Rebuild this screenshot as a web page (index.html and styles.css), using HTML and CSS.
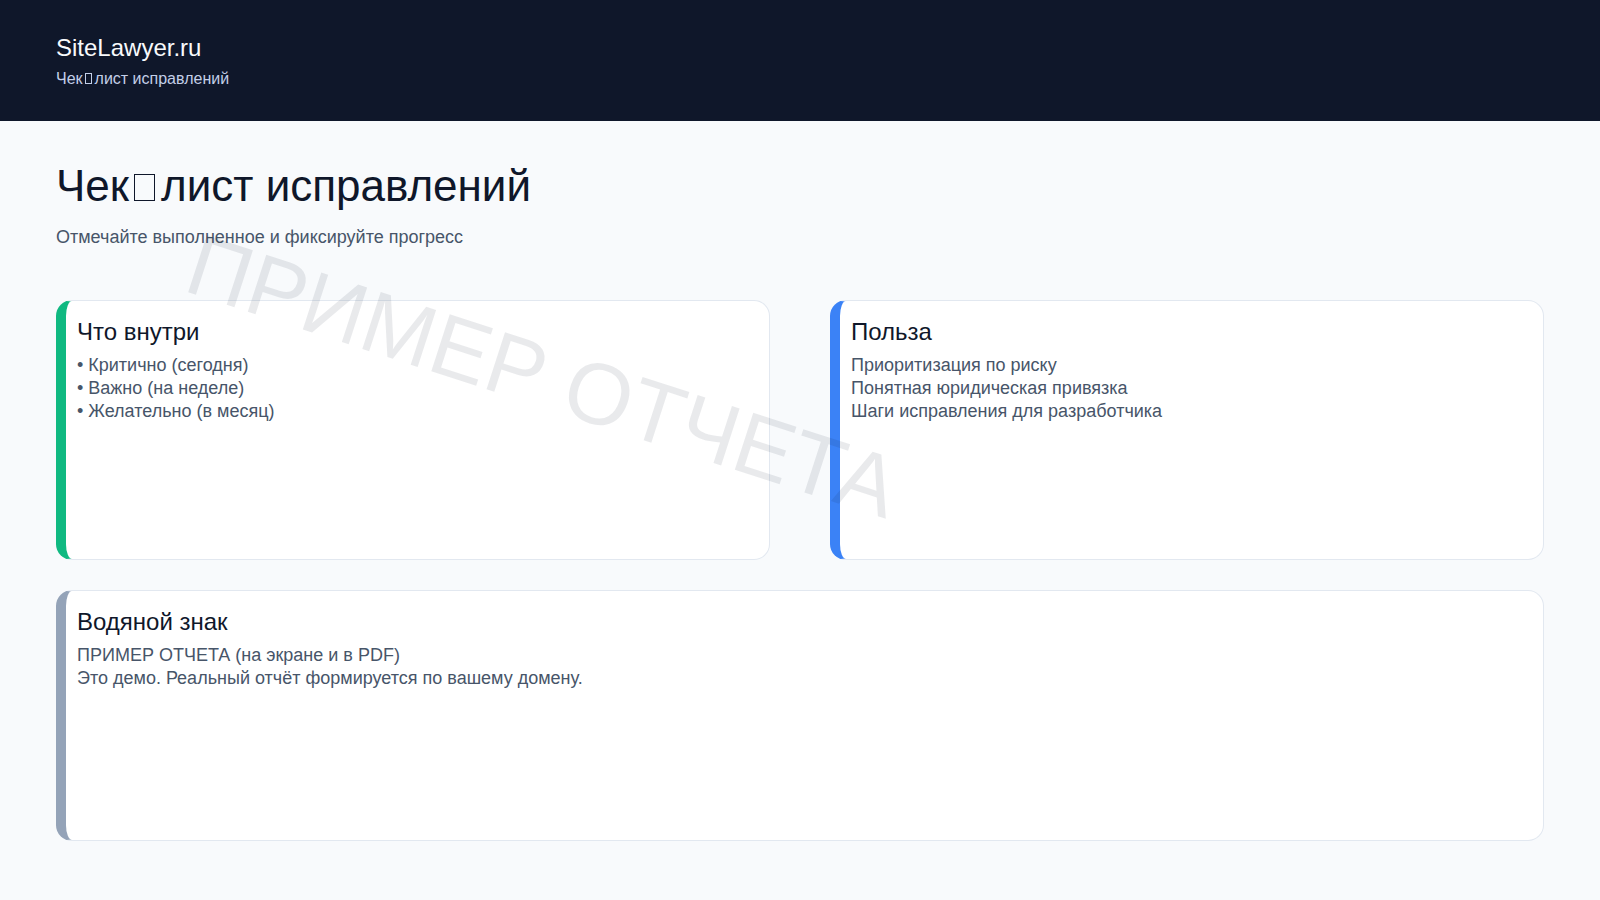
FILE: index.html
```html
<!DOCTYPE html>
<html lang="ru">
<head>
<meta charset="utf-8">
<title>SiteLawyer.ru — Чек-лист исправлений</title>
<link rel="stylesheet" href="styles.css">
</head>
<body>
<header class="top">
  <div class="brand">SiteLawyer.ru</div>
  <div class="tagline">Чек<span class="tofu tofu-sm"></span>лист исправлений</div>
</header>
<main class="page">
  <h1 class="title">Чек<span class="tofu tofu-lg"></span>лист исправлений</h1>
  <p class="lead">Отмечайте выполненное и фиксируйте прогресс</p>
  <div class="grid">
    <section class="card card-green">
      <h2 class="card-title">Что внутри</h2>
      <div class="card-body">
        <div>• Критично (сегодня)</div>
        <div>• Важно (на неделе)</div>
        <div>• Желательно (в месяц)</div>
      </div>
    </section>
    <section class="card card-blue">
      <h2 class="card-title">Польза</h2>
      <div class="card-body">
        <div>Приоритизация по риску</div>
        <div>Понятная юридическая привязка</div>
        <div>Шаги исправления для разработчика</div>
      </div>
    </section>
    <section class="card card-gray card-wide">
      <h2 class="card-title">Водяной знак</h2>
      <div class="card-body">
        <div>ПРИМЕР ОТЧЕТА (на экране и в PDF)</div>
        <div>Это демо. Реальный отчёт формируется по вашему домену.</div>
      </div>
    </section>
  </div>
</main>
<div class="watermark">ПРИМЕР ОТЧЕТА</div>
</body>
</html>
```
FILE: styles.css
```css
html, body {
  margin: 0;
  padding: 0;
}
body {
  background: #f8fafc;
  font-family: "Liberation Sans", Arial, sans-serif;
  color: #0f172a;
  position: relative;
  min-height: 900px;
  overflow: hidden;
}
.top {
  background: #0f172a;
  height: 121px;
  box-sizing: border-box;
  padding: 34px 56px 0;
}
.brand {
  color: #f8fafc;
  font-size: 24px;
}
.tagline {
  margin-top: 8px;
  color: #c3cfe8;
  font-size: 16px;
}
.tofu {
  display: inline-block;
  box-sizing: border-box;
  border: 1px solid currentColor;
  vertical-align: baseline;
}
.tofu-sm {
  width: 7px;
  height: 11px;
  margin: 0 3px 0 2px;
}
.tofu-lg {
  width: 21px;
  height: 27px;
  border-width: 1.5px;
  margin: 0 6px 0 5px;
}
.page {
  padding: 40px 56px 0;
}
.title {
  margin: 0 0 16px;
  font-size: 44px;
  font-weight: 400;
  color: #0f172a;
}
.lead {
  margin: 0 0 52px;
  font-size: 18px;
  color: #475569;
}
.grid {
  display: grid;
  grid-template-columns: 1fr 1fr;
  grid-template-rows: 260px 251px;
  column-gap: 60px;
  row-gap: 30px;
}
.card {
  box-sizing: border-box;
  background: #ffffff;
  border: 1px solid #e2e8f0;
  border-left: 10px solid #94a3b8;
  border-radius: 16px;
  padding: 17px 20px 20px 11px;
}
.card-green { border-left-color: #10b981; }
.card-blue { border-left-color: #3b82f6; }
.card-gray { border-left-color: #94a3b8; }
.card-wide { grid-column: 1 / span 2; }
.card-title {
  margin: 0 0 8px;
  font-size: 24px;
  font-weight: 400;
  color: #0f172a;
}
.card-body {
  font-size: 18px;
  line-height: 23px;
  color: #475569;
}
.watermark {
  position: absolute;
  left: 543px;
  top: 376px;
  transform: translate(-50%, -50%) rotate(18deg);
  font-size: 87px;
  white-space: nowrap;
  color: rgba(15, 23, 42, 0.09);
  pointer-events: none;
}
```
